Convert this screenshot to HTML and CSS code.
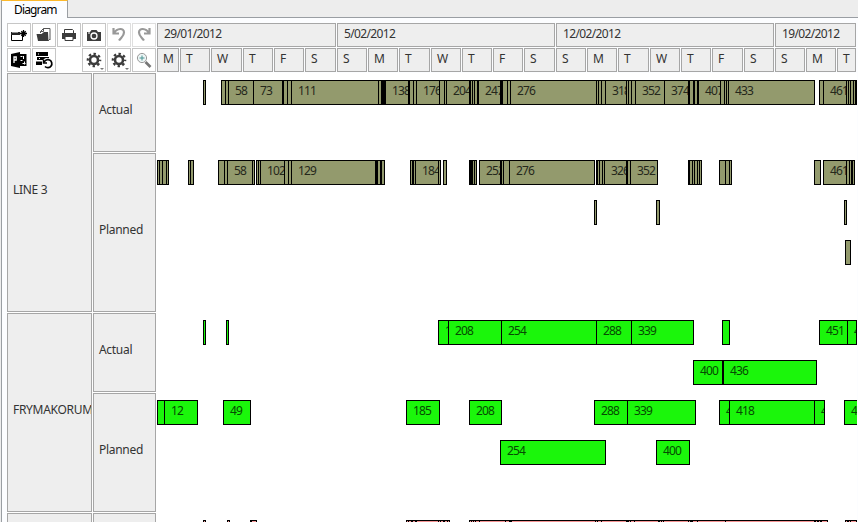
FILE: index.html
```html
<!DOCTYPE html>
<html lang="en">
<head>
<meta charset="utf-8">
<title>Diagram</title>
<link rel="stylesheet" href="styles.css">
</head>
<body>
<div class="window">
  <div class="tabs"><div class="tab">Diagram</div><div class="tab-rest"></div></div>
  <div class="panel">
    <div class="head">
      <div class="toolbar">
        <button class="tool" aria-label="New"><svg viewBox="0 0 22 22"><path d="M3.500 9.500h11v7h-11z" fill="#fff" stroke="#000"/><path d="M3 8h9v3H3z" fill="#222"/><path d="M4.500 8.500h1m1 0h1m1 0h1" stroke="#fff"/><path d="M15.500 6v7M12 9.500h7M13.300 7.300l4.400 4.400m0-4.400l-4.400 4.400" stroke="#000" stroke-width="1.300"/></svg></button>
        <button class="tool" aria-label="Open"><svg viewBox="0 0 22 22"><path d="M7.500 9V7.500L10.500 4.500h6.500V16" fill="#fff" stroke="#555"/><path d="M7.500 7.500h3v-3" fill="none" stroke="#555"/><path d="M3.500 10h5l2.500-2h4l.5 9H5z" fill="#3c3c3c"/><path d="M15 17l2-2" stroke="#555"/></svg></button>
        <button class="tool" aria-label="Print"><svg viewBox="0 0 22 22"><path d="M6.500 9V5.500h8l1 1V9" fill="#fff" stroke="#3c3c3c"/><path d="M4 9h14v6H4z" fill="#3c3c3c"/><path d="M7 12.500h8v4H7z" fill="#fff" stroke="#3c3c3c"/></svg></button>
        <button class="tool" aria-label="Snapshot"><svg viewBox="0 0 22 22"><path d="M4 8h3l1.500-2h5L15 8h3v9H4z" fill="#3c3c3c"/><circle cx="11" cy="12" r="3" fill="#3c3c3c" stroke="#fff" stroke-width="1.300"/><path d="M5 9h2" stroke="#fff"/></svg></button>
        <button class="tool off" aria-label="Undo"><svg viewBox="0 0 22 22"><path d="M5.500 4v5.500H11M6 9C9 4 16 3.500 16 8.500c0 3.500-3 5-5 8" fill="none" stroke="#999" stroke-width="2.200"/></svg></button>
        <button class="tool off" aria-label="Redo"><svg viewBox="0 0 22 22"><path d="M16.500 4v5.500H11M16 9C13 4 6 3.500 6 8.500c0 3.500 3 5 5 8" fill="none" stroke="#999" stroke-width="2.200"/></svg></button>
        <button class="tool" aria-label="Project"><svg viewBox="0 0 22 22"><path d="M3 5l9-2v16l-9-2z"/><path d="M12 5h6.500v12H12z"/><path d="M6 14V8h2.200v3H6" fill="none" stroke="#fff" stroke-width="1.300"/><path d="M12.500 7.500h2M15.500 7v3M12.500 11.500h2m0 3h3m-1-2v3" stroke="#fff"/></svg></button>
        <button class="tool" aria-label="Reload"><svg viewBox="0 0 22 22"><path d="M3 3h12v4H3zM4 8h12v3H4zM3 12.500h6V16H3z"/><path d="M5 5h1M6 9.500h1" stroke="#fff"/><circle cx="14" cy="14" r="5" fill="#fff"/><path d="M10.500 10.500V14H14" fill="none" stroke="#000" stroke-width="1.500"/><path d="M11 13.500a4 4 0 1 1 1 4" fill="none" stroke="#000" stroke-width="1.700"/></svg></button>
        <span></span>
        <button class="tool" aria-label="Settings"><svg viewBox="0 0 22 22"><g fill="none" stroke="#3c3c3c"><circle cx="11" cy="11" r="4" stroke-width="2.600"/><circle cx="11" cy="11" r="6.200" stroke-width="2.200" stroke-dasharray="2.430 2.430" stroke-dashoffset="1.215"/></g><path d="M17 19h4l-2 2z" fill="#777"/></svg></button>
        <button class="tool" aria-label="View settings"><svg viewBox="0 0 22 22"><g fill="none" stroke="#3c3c3c"><circle cx="11" cy="11" r="4" stroke-width="2.600"/><circle cx="11" cy="11" r="6.200" stroke-width="2.200" stroke-dasharray="2.430 2.430" stroke-dashoffset="1.215"/></g><path d="M17 19h4l-2 2z" fill="#777"/></svg></button>
        <button class="tool" aria-label="Zoom"><svg viewBox="0 0 22 22"><path d="M12.500 13l5 5" stroke="#777" stroke-width="2.600"/><circle cx="9" cy="9" r="4.600" fill="#eef6f6" stroke="#999"/><path d="M9 6.500v5M6.500 9h5" stroke="#489292"/></svg></button>
      </div>
      <div class="scale">
        <div class="weeks" id="weeks"></div>
        <div class="days" id="days"></div>
      </div>
    </div>
    <div class="body">
      <div class="labels">
        <div class="cell machine">LINE 3</div><div class="cell">Actual</div><div class="cell">Planned</div>
        <div class="cell machine">FRYMAKORUM</div><div class="cell">Actual</div><div class="cell">Planned</div>
        <div class="cell"></div><div class="cell"></div>
      </div>
      <div class="lanes" id="lanes"></div>
    </div>
  </div>
</div>
<script src="chart.js"></script>
</body>
</html>
```
FILE: styles.css
```css
* { box-sizing: border-box; }
body {
  margin: 0;
  background: #ededed;
  color: #333;
  font: 12px/16px "Noto Sans", "Open Sans", sans-serif;
  letter-spacing: -0.3px;
}
.window {
  width: 858px;
  height: 522px;
  overflow: hidden;
  display: flex;
  flex-direction: column;
  padding-left: 1px;
}
.tabs { display: flex; height: 18px; flex: none; }
.tab {
  width: 67px;
  border: 1px solid #9a9ea3;
  border-top-color: #fdb92b;
  border-bottom: 0;
  background: #fcfdff;
  color: #000;
  padding: 1px 0 0 12px;
  letter-spacing: -0.85px;
}
.tab-rest { flex: 1; border-bottom: 1px solid #9a9ea3; }
.panel {
  flex: 1;
  min-height: 0;
  border-left: 1px solid #9a9ea3;
  background: #fcfdff;
  padding: 5px 0 0 5px;
}
.head { display: flex; gap: 1px; height: 50px; }
.toolbar {
  display: grid;
  grid-template-columns: repeat(6, 24px);
  grid-template-rows: 24px 24px;
  gap: 1px;
  background: #fff;
}
.tool {
  padding: 0;
  border: 1px solid #c6c6c6;
  background: #fff;
  overflow: hidden;
}
.tool.off { border-color: #dedede; }
.tool svg { display: block; width: 22px; height: 22px; }
.scale { display: flex; flex-direction: column; gap: 1px; width: 700px; }
.weeks, .days { display: flex; gap: 1px; height: 24px; }
.cell {
  border: 1px solid #a6a6a6;
  background: #eee;
  padding-left: 5px;
  overflow: hidden;
  white-space: nowrap;
  display: flex;
  align-items: center;
  flex: none;
}
.weeks .cell { letter-spacing: -0.65px; padding-bottom: 2px; padding-left: 6px; }
.days .cell { padding-bottom: 2px; }
.body { display: flex; gap: 1px; background: #fff; margin-right: 1px; }
.labels {
  display: grid;
  grid-template-columns: 85px 63px;
  grid-template-rows: 79px 159px 79px 119px 79px;
  gap: 1px;
}
.labels .cell { padding-bottom: 5px; }
.machine { grid-row: span 2; }
.lanes { width: 700px; padding-top: 7px; }
.lane {
  display: grid;
  grid-template-columns: repeat(700, 1px);
  height: 25px;
  margin-bottom: 15px;
}
.run {
  grid-row: 1;
  display: grid;
  grid-template-columns: subgrid;
  background: #000;
  padding: 1px 0;
}
.bar {
  grid-row: 1;
  min-width: 0;
  overflow: hidden;
  white-space: nowrap;
  padding: 1px 0 0 6px;
  line-height: 17px;
  letter-spacing: -0.85px;
  color: #222;
}
.bar.thin { padding: 0; }
.olive .bar { background: #939a6d; color: #25271b; }
.green .bar { background: #1bf60b; color: #064a02; }
.pink .bar { background: #f59393; }
```
FILE: chart.js
```js
const ORIGIN = 157;

// [label, left, right]
const weeks = [["29/01/2012", 157, 336], ["5/02/2012", 337, 555], ["12/02/2012", 556, 774], ["19/02/2012", 775, 856]];
const dayEdges = [157, 180, 211, 243, 274, 305, 337, 368, 399, 431, 462, 493, 524, 556, 587, 618, 650, 681, 712, 744, 775, 806, 837, 857];
const dayNames = "MTWTFSS";

// Each run is [start, end, [divider, width, label of the bar to its right]...]
const lanes = [
  ["olive", [203, 206], [221, 815, [225], [228, 1, 58], [253, 1, 73], [282, 2], [287], [291, 1, 111], [378], [381, 5, 138], [408, 2], [413], [416, 1, 176], [439], [444], [446, 1, 204], [469, 2], [472], [474], [477, 2, 247], [500, 3], [507], [510, 1, 276], [596], [598], [601], [605, 1, 318], [626], [628], [631], [635, 1, 352], [664, 1, 374], [688, 2], [693, 2], [697, 2, 407], [720], [724], [726], [728, 1, 433]], [819, 857, [823, 1, 461], [846], [848], [850], [853], [855, 2]]],
  ["olive"],
  ["olive", [157, 169, [159], [162], [166]], [188, 194, [190]], [218, 255, [224], [227, 1, 58], [252]], [256, 385, [258], [260, 1, 102], [284], [288], [291, 1, 129], [375, 3], [380, 2]], [410, 441, [412, 2], [415, 1, 184], [438]], [443, 447], [469, 477, [470, 3], [474]], [479, 595, [479, 1, 252], [500, 2], [503], [509, 1, 276]], [596, 658, [597, 1], [599], [602], [604, 1, 326], [626, 2], [630, 1, 352]], [688, 702, [689], [692], [694], [697], [699]], [719, 732, [725], [729]], [814, 821], [823, 855, [823, 1, 461], [846], [849], [851, 2]]],
  ["olive", [594, 597], [656, 660], [844, 847]],
  ["olive", [845, 851]],
  ["olive"],
  ["green", [203, 206], [226, 229], [438, 694, [438, 1, 185], [448, 1, 208], [501, 1, 254], [596, 1, 288], [631, 1, 339]], [722, 730], [819, 857, [819, 1, 451], [847, 1, 485]]],
  ["green", [693, 817, [693, 1, 400], [722, 2, 436]]],
  ["green", [157, 198, [164, 1, 12]], [223, 251, [223, 1, 49]], [406, 440, [406, 1, 185]], [469, 502, [469, 1, 208]], [594, 696, [594, 1, 288], [627, 1, 339]], [719, 825, [719, 1, 400], [729, 1, 418], [814, 1, 451]], [844, 858, [844, 1, 485]]],
  ["green", [500, 606, [500, 1, 254]], [656, 690, [656, 1, 400]]],
  ["green"],
  ["pink", [203, 206], [227, 230], [250, 257, [251]], [406, 450, [408], [411, 2], [415, 2], [438], [440], [443, 2], [447]], [469, 828, [471], [473], [475], [479], [505], [509, 3], [595], [597], [601], [626, 3], [630], [634], [658, 2], [661], [663], [688], [690, 3], [697], [725], [814, 2], [817, 2], [820, 2]], [845, 857, [847, 2], [850]]]
];

const el = (cls, text = "") => {
  const node = document.createElement("div");
  node.className = cls;
  node.textContent = text;
  return node;
};

const addCell = (parent, label, left, right) => {
  const cell = el("cell", label);
  cell.style.width = right - left + "px";
  parent.append(cell);
};
weeks.forEach(([label, left, right]) => addCell(document.getElementById("weeks"), label, left, right));
for (let i = 0; i < dayEdges.length - 1; i++)
  addCell(document.getElementById("days"), dayNames[i % 7], dayEdges[i], dayEdges[i + 1] - 1);

for (const [colour, ...runs] of lanes) {
  const lane = el("lane " + colour);
  for (const [start, end, ...cuts] of runs) {
    const run = el("run");
    run.style.gridColumn = `${start - ORIGIN + 1} / ${Math.min(end, 857) - ORIGIN + 1}`;
    const dividers = cuts.length && cuts[0][0] === start ? cuts : [[start, 1], ...cuts];
    dividers.forEach(([x, width = 1, label = ""], i) => {
      const from = x + width;
      const to = i + 1 < dividers.length ? dividers[i + 1][0] : end - 1;
      if (to <= from) return;
      const bar = el(label ? "bar" : "bar thin", label);
      bar.style.gridColumn = `${from - start + 1} / ${Math.min(to, 857) - start + 1}`;
      run.append(bar);
    });
    lane.append(run);
  }
  document.getElementById("lanes").append(lane);
}
```
